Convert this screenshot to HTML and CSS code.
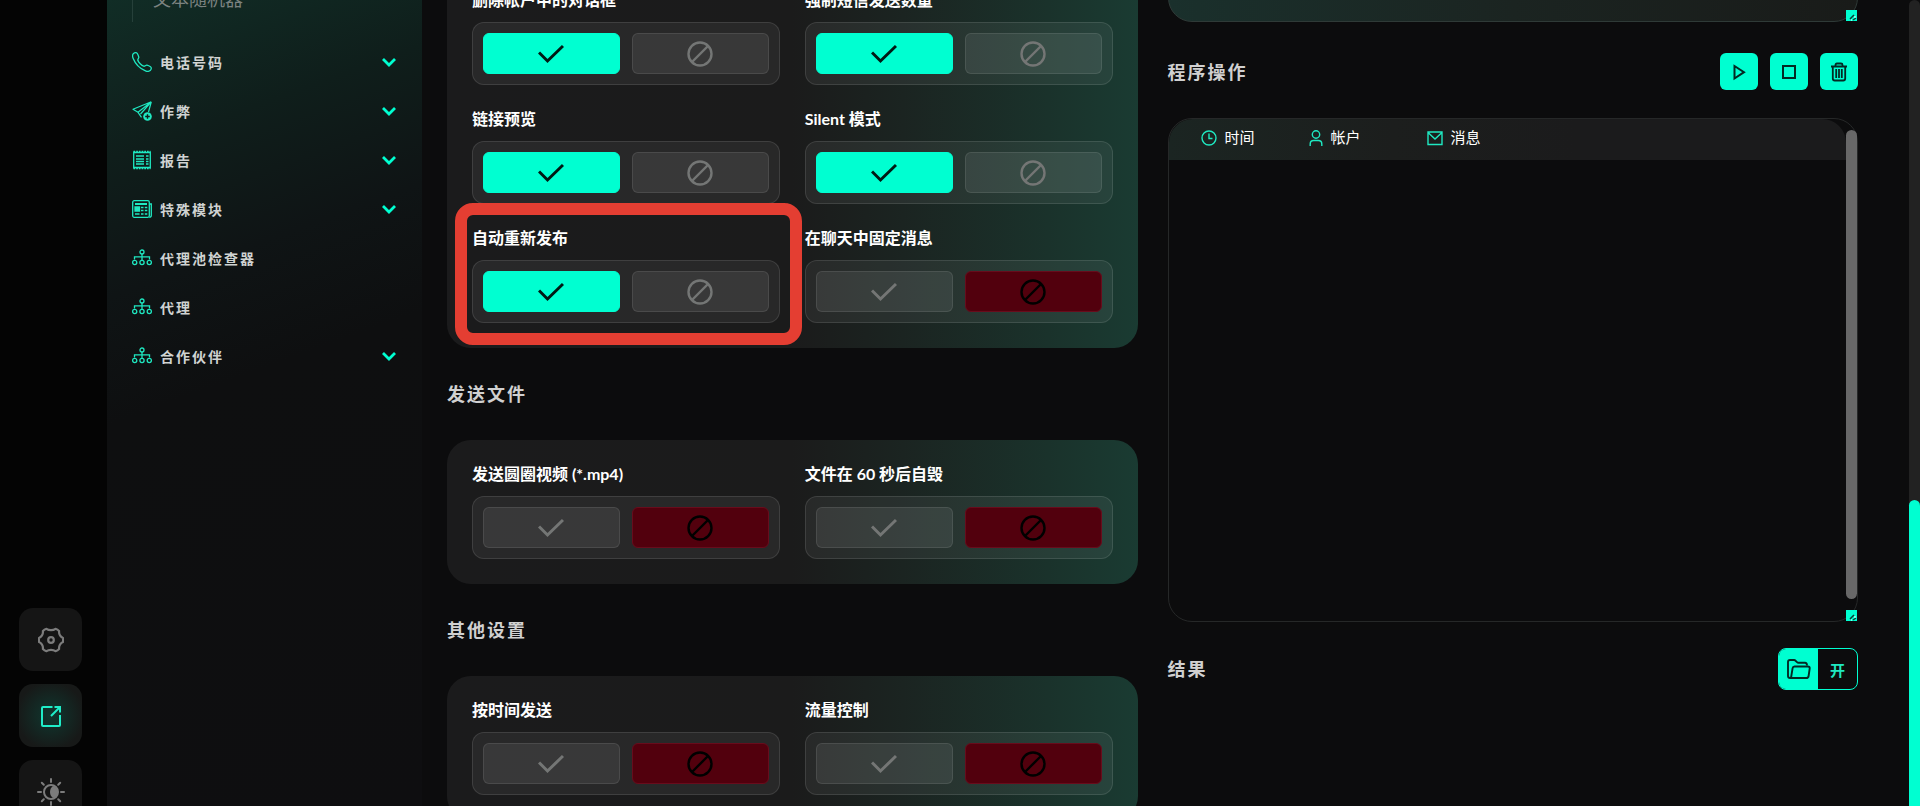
FILE: index.html
```html
<!DOCTYPE html>
<html lang="zh-CN">
<head>
  <meta charset="UTF-8">
  <meta name="viewport" content="width=device-width, initial-scale=1">
  <title>程序设置</title>
  <link rel="stylesheet" href="styles.css">
</head>
<body>
  <svg class="sprite" aria-hidden="true">
    <symbol id="check" viewBox="0 0 26 26"><path d="M1 11.500l8.500 8.500L25 5" fill="none" stroke="currentColor" stroke-width="3"/></symbol>
    <symbol id="ban" viewBox="0 0 26 26"><circle cx="13" cy="13" r="11.5" fill="none" stroke="currentColor" stroke-width="2.4"/><path d="M5 21L21 5" stroke="currentColor" stroke-width="2.4"/></symbol>
    <symbol id="chevron" viewBox="0 0 16 10"><path d="M2 2l6 6 6-6" fill="none" stroke="currentColor" stroke-width="2.8"/></symbol>
    <symbol id="tree" viewBox="0 0 20 20"><g fill="none" stroke="currentColor" stroke-width="1.3"><circle cx="10" cy="4" r="2"/><circle cx="2.700" cy="14.500" r="2.100"/><circle cx="10" cy="14.500" r="2.100"/><circle cx="17.300" cy="14.500" r="2.100"/><path d="M10 6v6.400M2.500 11.500V8.800h15v2.700"/></g></symbol>
    <symbol id="grip" viewBox="0 0 11 11"><path d="M0 0h11v11H0z" fill="#00ffd1"/><path d="M4 9l4-4M7 10l3-2" stroke="#0b3b34" stroke-width="1.500"/><path d="M8 7h2M5 10h1" stroke="#fff"/></symbol>
  </svg>

  <div class="layout">
    <div class="rail">
      <button class="rail-btn" aria-label="设置">
        <svg width="26" height="26" viewBox="0 0 26 26" fill="none" stroke="currentColor" stroke-width="2.200" stroke-linejoin="round"><circle cx="13" cy="13" r="2.800"/><path d="M8.500 1.800c1.200.9 2.600 1.300 4.500 1.300s3.300-.4 4.500-1.300c1.500.5 2.600 1.200 3.600 2.200-.2 1.600.1 3 .9 4.300.8 1.300 1.800 2.100 3 2.600.2 1.500.2 2.700 0 4.200-1.200.5-2.200 1.300-3 2.600-.8 1.300-1.100 2.700-.9 4.300-1 1-2.100 1.700-3.600 2.200-1.200-.9-2.600-1.300-4.500-1.300s-3.300.4-4.500 1.300C7 23.700 5.900 23 4.900 22c.2-1.600-.1-3-.9-4.300-.8-1.300-1.800-2.100-3-2.600-.2-1.500-.2-2.700 0-4.200 1.200-.5 2.200-1.300 3-2.600.8-1.300 1.100-2.700.9-4.300 1-1 2.100-1.700 3.600-2.200z"/></svg>
      </button>
      <button class="rail-btn active" aria-label="打开">
        <svg width="22" height="22" viewBox="0 0 22 22" fill="none" stroke="currentColor" stroke-width="2"><path d="M12.500 2H3Q2 2 2 3v17q0 1 1 1h16q1 0 1-1V10"/><path d="M11 11l8.500-8.500M14.500 2H20v5.500"/></svg>
      </button>
      <button class="rail-btn" aria-label="主题">
        <svg width="28" height="28" viewBox="0 0 28 28" fill="none" stroke="currentColor" stroke-width="2" stroke-linecap="round"><circle cx="14" cy="14" r="7"/><path d="M16 8a6.200 6.200 0 0 1 0 12c-4-2.500-4-9.500 0-12z" fill="currentColor" stroke="none"/><path d="M14 1v3M14 24v3M1 14h3M24 14h3M4.800 4.800l2 2M21.200 21.200l2 2M4.800 23.200l2-2M21.200 6.800l2-2"/></svg>
      </button>
    </div>

    <nav class="sidebar">
      <div class="submenu"><a href="#">文本随机器</a></div>
      <ul class="menu">
        <li><a href="#">
          <svg class="icon" viewBox="0 0 20 20" fill="none" stroke="currentColor" stroke-width="1.300"><path d="M1.200 1.800C3 .3 4.600.4 5.300 1.500c.8 1.300 1.200 2.400 1.500 3.600.2 1.200-1.300 2-1 3.200.6 2 3.800 5.300 5.900 5.900 1.200.3 2-1.200 3.200-1 1.200.3 2.300.7 3.600 1.500 1.100.7 1.200 2.300-.3 3.900-1.200 1-3 .9-4.700.2C8.200 16.700 3.300 11.800 1.200 6.500.5 4.800.2 3 1.200 1.800z"/></svg>
          电话号码<svg class="arrow"><use href="#chevron"/></svg></a></li>
        <li><a href="#">
          <svg class="icon" viewBox="0 0 20 20" fill="none" stroke="currentColor" stroke-width="1.200" stroke-linejoin="round"><path d="M19.300.8L1 8.300l5 3 3.500 5M19.300.8L6 11.300M19.300.8L8.500 13M19.300.8L16.500 11"/><circle cx="15.500" cy="15.500" r="4.300" fill="currentColor" stroke="none"/><path d="M13.200 15.500h4.600M15.500 13.200v4.600" stroke="#0d1f1c" stroke-width="1.400"/></svg>
          作弊<svg class="arrow"><use href="#chevron"/></svg></a></li>
        <li><a href="#">
          <svg class="icon" viewBox="0 0 20 20" fill="none" stroke="currentColor" stroke-width="1.300"><path d="M1.700 1.500v17M18.300 1.500v17"/><path d="M1.500 1.500h17M1.500 18.500h17" stroke-dasharray="1.700 1"/><path d="M2 2.500h16M2 17.500h16M4 6h8M4 9h8M4 11.500h8M4 14h8M14 6h2.500M14 9h2.500M14 11.500h2.500M14 14h2.500"/></svg>
          报告<svg class="arrow"><use href="#chevron"/></svg></a></li>
        <li><a href="#">
          <svg class="icon" viewBox="0 0 20 20" fill="none" stroke="currentColor" stroke-width="1.300"><rect x=".7" y="1.700" width="16.600" height="16.600" rx="1.500"/><path d="M17.500 5h1.800v11.500q0 1.800-2 1.800"/><path d="M3 5h12" stroke-width="2"/><path d="M3 8h4.500v4H3z" fill="currentColor"/><path d="M9 8.500h2.500M12.800 8.500h2.500M9 11.500h2.500M12.800 11.500h2.500M3 15h4.500M9 15h2.500M12.800 15h2.500"/></svg>
          特殊模块<svg class="arrow"><use href="#chevron"/></svg></a></li>
        <li><a href="#"><svg class="icon"><use href="#tree"/></svg>代理池检查器</a></li>
        <li><a href="#"><svg class="icon"><use href="#tree"/></svg>代理</a></li>
        <li><a href="#"><svg class="icon"><use href="#tree"/></svg>合作伙伴<svg class="arrow"><use href="#chevron"/></svg></a></li>
      </ul>
    </nav>

    <main class="content">
      <div class="settings">
        <section class="card">
          <div class="option">
            <span id="o1">删除帐户中的对话框</span>
            <div class="toggle" role="group" aria-labelledby="o1">
              <button class="yes on" aria-label="是"><svg><use href="#check"/></svg></button>
              <button class="no" aria-label="否"><svg><use href="#ban"/></svg></button>
            </div>
          </div>
          <div class="option">
            <span id="o2">强制短信发送数量</span>
            <div class="toggle" role="group" aria-labelledby="o2">
              <button class="yes on" aria-label="是"><svg><use href="#check"/></svg></button>
              <button class="no" aria-label="否"><svg><use href="#ban"/></svg></button>
            </div>
          </div>
          <div class="option">
            <span id="o3">链接预览</span>
            <div class="toggle" role="group" aria-labelledby="o3">
              <button class="yes on" aria-label="是"><svg><use href="#check"/></svg></button>
              <button class="no" aria-label="否"><svg><use href="#ban"/></svg></button>
            </div>
          </div>
          <div class="option">
            <span id="o4">Silent 模式</span>
            <div class="toggle" role="group" aria-labelledby="o4">
              <button class="yes on" aria-label="是"><svg><use href="#check"/></svg></button>
              <button class="no" aria-label="否"><svg><use href="#ban"/></svg></button>
            </div>
          </div>
          <div class="option marked">
            <span id="o5">自动重新发布</span>
            <div class="toggle" role="group" aria-labelledby="o5">
              <button class="yes on" aria-label="是"><svg><use href="#check"/></svg></button>
              <button class="no" aria-label="否"><svg><use href="#ban"/></svg></button>
            </div>
          </div>
          <div class="option">
            <span id="o6">在聊天中固定消息</span>
            <div class="toggle" role="group" aria-labelledby="o6">
              <button class="yes" aria-label="是"><svg><use href="#check"/></svg></button>
              <button class="no on" aria-label="否"><svg><use href="#ban"/></svg></button>
            </div>
          </div>
        </section>

        <h2>发送文件</h2>
        <section class="card">
          <div class="option">
            <span id="o7">发送圆圈视频 (*.mp4)</span>
            <div class="toggle" role="group" aria-labelledby="o7">
              <button class="yes" aria-label="是"><svg><use href="#check"/></svg></button>
              <button class="no on" aria-label="否"><svg><use href="#ban"/></svg></button>
            </div>
          </div>
          <div class="option">
            <span id="o8">文件在 60 秒后自毁</span>
            <div class="toggle" role="group" aria-labelledby="o8">
              <button class="yes" aria-label="是"><svg><use href="#check"/></svg></button>
              <button class="no on" aria-label="否"><svg><use href="#ban"/></svg></button>
            </div>
          </div>
        </section>

        <h2>其他设置</h2>
        <section class="card">
          <div class="option">
            <span id="o9">按时间发送</span>
            <div class="toggle" role="group" aria-labelledby="o9">
              <button class="yes" aria-label="是"><svg><use href="#check"/></svg></button>
              <button class="no on" aria-label="否"><svg><use href="#ban"/></svg></button>
            </div>
          </div>
          <div class="option">
            <span id="o10">流量控制</span>
            <div class="toggle" role="group" aria-labelledby="o10">
              <button class="yes" aria-label="是"><svg><use href="#check"/></svg></button>
              <button class="no on" aria-label="否"><svg><use href="#ban"/></svg></button>
            </div>
          </div>
        </section>
      </div>

      <div class="output">
        <div class="message">
          <textarea aria-label="消息文本"></textarea>
          <svg class="grip"><use href="#grip"/></svg>
        </div>

        <div class="bar">
          <h2>程序操作</h2>
          <div class="actions">
            <button aria-label="开始"><svg width="20" height="20" viewBox="0 0 20 20" fill="none" stroke="currentColor" stroke-width="2"><path d="M5.500 4v12.500L15 10.200z"/></svg></button>
            <button aria-label="停止"><svg width="20" height="20" viewBox="0 0 20 20" fill="none" stroke="currentColor" stroke-width="2"><path d="M4 4h12v12H4z"/></svg></button>
            <button aria-label="清除"><svg width="20" height="20" viewBox="0 0 20 20" fill="none" stroke="currentColor" stroke-width="1.800"><path d="M2 4.500h16M6.500 4.500V3q0-1.500 1.500-1.500h4q1.500 0 1.500 1.500v1.500M3.800 4.500v12q0 2 2 2h8.400q2 0 2-2v-12M7.200 7v9M10 7v9M12.800 7v9"/></svg></button>
          </div>
        </div>

        <div class="log">
          <table>
            <thead>
              <tr>
                <th class="col-time"><svg width="16" height="16" viewBox="0 0 16 16" fill="none" stroke="currentColor" stroke-width="1.400"><circle cx="8" cy="8" r="7"/><path d="M8 3.500v5h3.500"/></svg>时间</th>
                <th class="col-account"><svg width="14" height="16" viewBox="0 0 14 16" fill="none" stroke="currentColor" stroke-width="1.400"><circle cx="7" cy="4.500" r="3.700"/><path d="M1.200 16v-2q0-3.500 3.500-3.500h4.600q3.500 0 3.500 3.500v2"/></svg>帐户</th>
                <th><svg width="16" height="16" viewBox="0 0 16 16" fill="none" stroke="currentColor" stroke-width="1.400"><path d="M1 2h14v12.500H1zM1 2.500l7 6.500 7-6.500"/></svg>消息</th>
              </tr>
            </thead>
          </table>
          <div class="log-thumb"></div>
          <svg class="grip"><use href="#grip"/></svg>
        </div>

        <div class="bar result">
          <h2>结果</h2>
          <button class="open">
            <span class="folder"><svg width="24" height="22" viewBox="0 0 24 22" fill="none" stroke="currentColor" stroke-width="1.900" stroke-linejoin="round"><path d="M4 20H3q-2 0-2-2V4q0-2 2-2h4q1 0 1.800 1l1.200 1.200q.6.600 1.500.6H18q2 0 2 2.700"/><path d="M7.500 8.500h13.300q2.200 0 1.900 2l-1.100 7.500q-.3 2-2.300 2H4l1.600-9.800q.3-1.700 1.900-1.700z"/></svg></span>
            <span class="state">开</span>
          </button>
        </div>
      </div>
    </main>

    <div class="page-scroll"><div class="page-thumb"></div></div>
  </div>
</body>
</html>
```

FILE: styles.css
```css
* {
  box-sizing: border-box;
}

html, body {
  margin: 0;
  padding: 0;
  height: 100%;
  font-family: Lato, 'Noto Sans CJK SC', sans-serif;
  background-color: #0c0c0d;
  color: #fff;
}

button {
  display: flex;
  align-items: center;
  justify-content: center;
  padding: 0;
  border: none;
  font-family: inherit;
  cursor: pointer;
}

h2 {
  margin: 0;
  font-size: 18px;
  line-height: 28px;
  letter-spacing: 2px;
  color: #d0d0d0;
}

.sprite {
  display: none;
}

.layout {
  display: flex;
  height: 100vh;
  overflow: hidden;
}

/* icon rail */
.rail {
  display: flex;
  flex-direction: column;
  justify-content: flex-end;
  gap: 13px;
  width: 107px;
  padding-left: 19px;
  margin-bottom: -17px;
  background-color: #040404;
}

.rail-btn {
  flex-shrink: 0;
  width: 63px;
  height: 63px;
  border-radius: 14px;
  background-color: #151515;
  color: #7c7c7c;
}

.rail-btn.active {
  color: #1fedc8;
  background: radial-gradient(circle, #10372f 0, #171918 34px);
}

/* sidebar */
.sidebar {
  width: 315px;
  padding: 0 25px;
  background: linear-gradient(160deg, #112d26 0, #0f1e1b 150px, #0f1415 280px, #0e0f10 400px, #0e0e10 100%);
}

.submenu {
  display: flow-root;
  height: 22px;
  margin-bottom: 15px;
  padding-left: 20px;
  border-left: 1px solid #26403a;
}

.submenu a {
  display: block;
  margin-top: -15px;
  font-size: 18px;
  line-height: 28px;
  color: #7b8280;
  text-decoration: none;
}

.menu {
  margin: 0;
  padding: 0;
  list-style: none;
}

.menu a {
  display: flex;
  align-items: center;
  height: 49px;
  font-size: 14px;
  font-weight: bold;
  letter-spacing: 2px;
  color: #d0d3d2;
  text-decoration: none;
}

.icon {
  width: 20px;
  height: 20px;
  margin-right: 8px;
  color: #1fe8c1;
}

.arrow {
  width: 16px;
  height: 10px;
  margin-left: auto;
  color: #00ffd1;
}

/* content */
.content {
  flex: 1;
  display: flex;
  gap: 30px;
  padding: 0 51px 0 25px;
}

.settings,
.output {
  flex: 1;
  min-width: 0;
}

.settings {
  margin-top: -34px;
}

.settings h2 {
  margin: 32px 0;
}

.card {
  display: grid;
  grid-template-columns: 1fr 1fr;
  gap: 22px 25px;
  padding: 22px 25px 25px;
  border-radius: 24px;
  background: linear-gradient(90deg, #1b1b1c 0, #1b1b1b 50%, #1b2421 66%, #1a322b 87%, #1a3b32 100%);
}

.option {
  font-size: 16px;
  font-weight: bold;
  line-height: 24px;
}

.toggle {
  display: grid;
  grid-template-columns: 1fr 1fr;
  gap: 12px;
  margin-top: 10px;
  padding: 10px;
  border: 1px solid rgba(255, 255, 255, 0.11);
  border-radius: 12px;
  background-color: rgba(255, 255, 255, 0.06);
}

.toggle button {
  height: 41px;
  border: 1px solid rgba(255, 255, 255, 0.09);
  border-radius: 6px;
  background-color: rgba(255, 255, 255, 0.08);
  color: #747675;
}

.toggle svg {
  width: 26px;
  height: 26px;
}

.toggle .yes.on {
  border-color: #00ffd1;
  background-color: #00ffd1;
  color: #001a14;
}

.toggle .no.on {
  border-color: #680c1c;
  background-color: #52000d;
  color: #000;
}

.marked {
  position: relative;
}

/* frame round the marked option */
.marked::after {
  content: "";
  position: absolute;
  inset: -23px -22px -22px -17px;
  border: 12px solid #e43e32;
  border-radius: 18px;
  pointer-events: none;
}

/* output */
.message {
  position: relative;
  margin-top: -98px;
  height: 120px;
}

.message textarea {
  display: block;
  width: 100%;
  height: 100%;
  border: 1px solid #2f3a37;
  border-radius: 24px;
  background: linear-gradient(90deg, #1a302c 0, #1b2421 50%, #191b19 100%);
  color: #fff;
  resize: none;
}

.grip {
  position: absolute;
  right: 1px;
  bottom: 1px;
  width: 11px;
  height: 11px;
}

.bar {
  display: flex;
  align-items: center;
  justify-content: space-between;
  margin: 31px 0 28px;
}

.bar.result {
  margin: 26px 0 0;
}

.actions {
  display: flex;
  gap: 12px;
}

.actions button {
  width: 38px;
  height: 37px;
  border-radius: 6px;
  background-color: #00ffd1;
  color: #032a23;
}

.log {
  position: relative;
  height: 504px;
  padding-right: 11px;
  border: 1px solid #262828;
  border-radius: 24px;
}

.log table {
  width: 100%;
  table-layout: fixed;
  border-collapse: collapse;
  border-radius: 24px 24px 0 0;
  overflow: hidden;
  background: linear-gradient(90deg, #1b2522 0, #1c1e1d 33%, #1b1b1c 60%, #1b1b1c 100%);
}

.log th {
  height: 41px;
  padding: 0 0 6px 32px;
  font-size: 15px;
  font-weight: normal;
  text-align: left;
}

.log th svg {
  margin-right: 8px;
  vertical-align: -3px;
  color: #1fe8c1;
}

.log .col-time {
  width: 108px;
}

.log .col-account {
  width: 118px;
}

.log-thumb {
  position: absolute;
  top: 11px;
  right: 0;
  width: 11px;
  height: 469px;
  border-radius: 6px;
  background-color: #686868;
}

.log .grip {
  right: 0;
  bottom: 0;
}

.open {
  width: 80px;
  height: 42px;
  align-items: stretch;
  border: 1px solid #00ffd1;
  border-radius: 8px;
  overflow: hidden;
  background: none;
}

.open span {
  flex: 1;
  display: flex;
  align-items: center;
  justify-content: center;
}

.folder {
  background-color: #00ffd1;
  color: #032a23;
}

.state {
  font-size: 15px;
  font-weight: bold;
  color: #1fe8c1;
}

/* page scroll */
.page-scroll {
  display: flex;
  align-items: flex-end;
  width: 11px;
  border-radius: 6px 6px 0 0;
  background-color: #222;
}

.page-thumb {
  width: 100%;
  height: 38%;
  border-radius: 6px 6px 0 0;
  background-color: #00ffd1;
}
```
